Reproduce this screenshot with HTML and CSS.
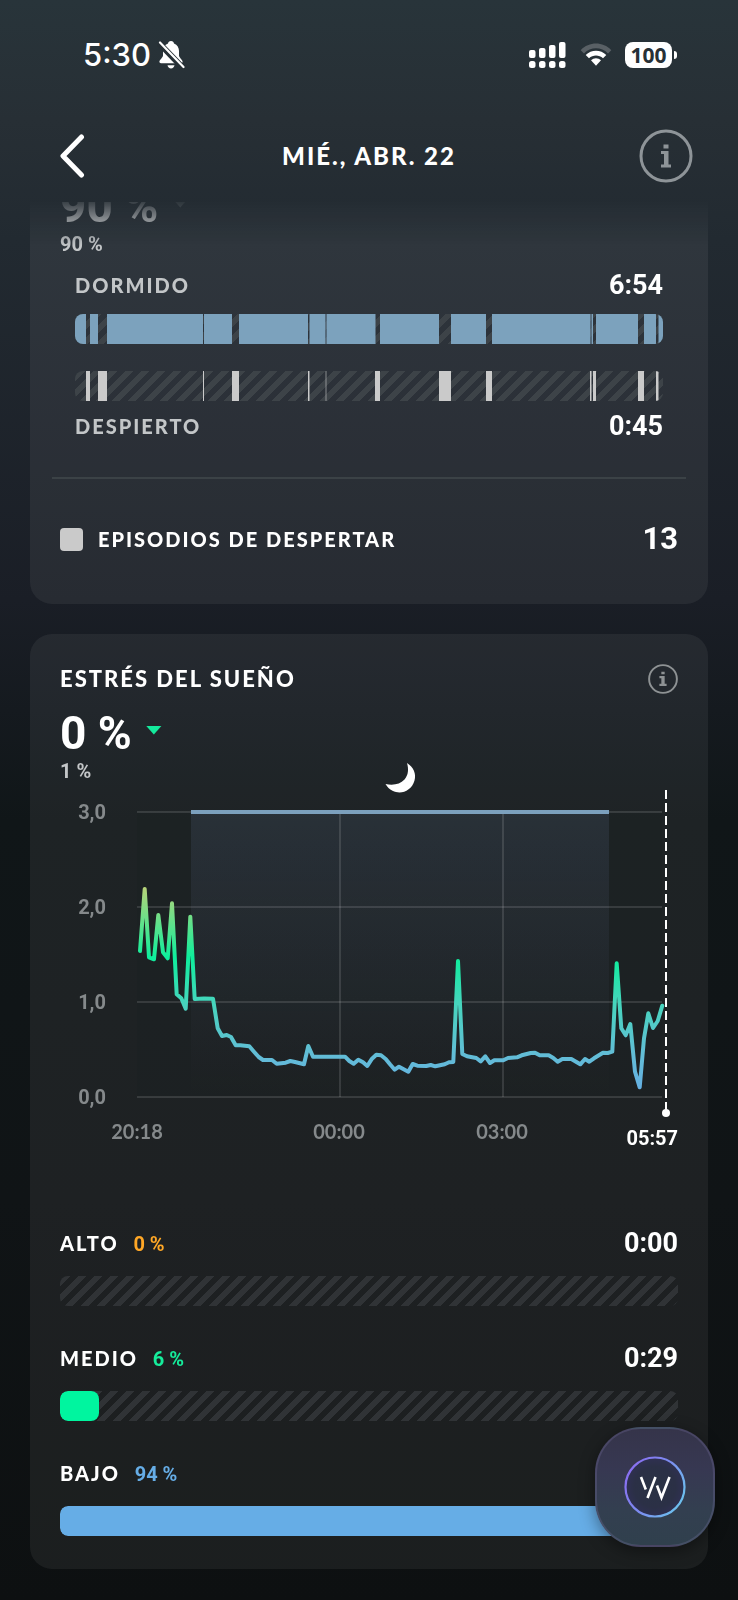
FILE: index.html
```html
<!DOCTYPE html>
<html lang="es">
<head>
    <meta charset="UTF-8">
    <meta name="viewport" content="width=device-width, initial-scale=1.0">
    <title>Estrés del sueño</title>
    <link rel="stylesheet" href="styles.css">
</head>
<body>
    <!-- Status bar -->
    <div class="status-bar">
        <div class="status-left">
            <span class="clock">5:30</span>
            <svg class="icon-bell" width="28" height="30" viewBox="0 0 28 30">
                <path d="M14 1c-1.800 0-2.800 1-3 2.400C7.600 4.600 6 7.600 6 11v4.500c0 2-3.600 4.300-3.600 6.300 0 .9.600 1.400 1.600 1.400h20c1 0 1.600-.5 1.600-1.400 0-2-3.600-4.300-3.600-6.300V11c0-3.400-1.600-6.400-5-7.600C16.800 2 15.800 1 14 1z" fill="#fff"/>
                <path d="M10.500 25.200h7c-.3 2-1.700 3.200-3.500 3.200s-3.200-1.200-3.500-3.200z" fill="#fff"/>
                <path d="M2 3L26 28" stroke="#273036" stroke-width="6"/>
                <path d="M3 2.500L26.500 27" stroke="#fff" stroke-width="2.200" stroke-linecap="round"/>
            </svg>
        </div>
        <div class="status-right">
            <svg width="38" height="28" viewBox="0 0 38 28" fill="#fff">
                <rect x="0" y="9" width="6.500" height="8" rx="2"/>
                <rect x="10" y="7" width="6.500" height="10" rx="2"/>
                <rect x="20" y="4" width="6.500" height="13" rx="2"/>
                <rect x="30" y="1" width="6.500" height="16" rx="2"/>
                <rect x="0" y="20" width="6.500" height="7" rx="2.500"/>
                <rect x="10" y="20" width="6.500" height="7" rx="2.500"/>
                <rect x="20" y="20" width="6.500" height="7" rx="2.500"/>
                <rect x="30" y="20" width="6.500" height="7" rx="2.500"/>
            </svg>
            <svg width="32" height="26" viewBox="0 0 32 26">
                <path d="M0.700 8.200C9-0.600 23-0.600 31.300 8.200L28 11.400C21.300 4.600 10.700 4.600 4 11.400z" fill="#596065"/>
                <path d="M5.700 13C11.300 7.300 20.700 7.300 26.300 13L23 16.300C19.200 12.500 12.800 12.500 9 16.300z" fill="#fff"/>
                <path d="M11 18.300C13.800 15.600 18.200 15.600 21 18.300L16 23.800z" fill="#fff"/>
            </svg>
            <span class="battery">100</span>
        </div>
    </div>

    <!-- Header -->
    <header class="header">
        <button class="back-btn" aria-label="Atrás">
            <svg width="26" height="44" viewBox="0 0 26 44" fill="none" stroke="#fff" stroke-width="5" stroke-linecap="round" stroke-linejoin="round">
                <path d="M21.500 3L3 22L21.500 41"/>
            </svg>
        </button>
        <h1>MIÉ., ABR. 22</h1>
        <button class="info-btn" aria-label="Información">
            <svg width="54" height="54" viewBox="0 0 54 54">
                <circle cx="27" cy="27" r="25" fill="none" stroke="#8e9498" stroke-width="3"/>
                <path d="M24.500 15.500h5v4h-5zM22 22h7.500v13.500H32V38.500H22V35.500h3V25h-3z" fill="#8e9498"/>
            </svg>
        </button>
    </header>

    <main class="scroll-area">
        <!-- Sleep efficiency -->
        <section class="card card-clipped">
            <div class="value">90 % <span class="trend trend-dim"></span></div>
            <div class="baseline">90 %</div>

            <div class="phases">
                <div class="row">
                    <span class="label dim">DORMIDO</span>
                    <span class="time">6:54</span>
                </div>
                <div class="track asleep">
                    <svg viewBox="0 0 588 30" preserveAspectRatio="none" fill="#7ca2bd">
                        <rect x="0" width="11" height="30"/>
                        <rect x="15" width="8" height="30"/>
                        <rect x="32" width="96" height="30"/>
                        <rect x="129" width="28" height="30"/>
                        <rect x="164" width="69" height="30"/>
                        <rect x="234.500" width="16" height="30"/>
                        <rect x="251.500" width="49" height="30"/>
                        <rect x="305" width="59" height="30"/>
                        <rect x="376" width="35" height="30"/>
                        <rect x="417" width="98.500" height="30"/>
                        <rect x="516.500" width="1.500" height="30"/>
                        <rect x="521" width="42" height="30"/>
                        <rect x="569" width="12" height="30"/>
                        <rect x="583.500" width="4.500" height="30"/>
                    </svg>
                </div>
                <div class="track awake">
                    <svg viewBox="0 0 588 30" preserveAspectRatio="none" fill="#cacaca">
                        <rect x="11" width="4" height="30"/>
                        <rect x="23" width="9" height="30"/>
                        <rect x="128" width="1" height="30"/>
                        <rect x="157" width="7" height="30"/>
                        <rect x="233" width="1.500" height="30"/>
                        <rect x="250.500" width="1" height="30" opacity="0.600"/>
                        <rect x="300" width="5" height="30"/>
                        <rect x="364" width="12" height="30"/>
                        <rect x="411" width="6" height="30"/>
                        <rect x="515" width="1.500" height="30"/>
                        <rect x="518" width="3" height="30"/>
                        <rect x="563" width="6" height="30"/>
                        <rect x="581" width="2.500" height="30"/>
                    </svg>
                </div>
                <div class="row">
                    <span class="label dim">DESPIERTO</span>
                    <span class="time">0:45</span>
                </div>
            </div>

            <div class="divider"></div>

            <div class="row episodes">
                <span class="legend">
                    <span class="swatch"></span>
                    <span class="label">EPISODIOS DE DESPERTAR</span>
                </span>
                <span class="count">13</span>
            </div>
        </section>

        <!-- Sleep stress -->
        <section class="card">
            <div class="row">
                <h2>ESTRÉS DEL SUEÑO</h2>
                <button class="info-btn" aria-label="Información sobre el estrés del sueño">
                    <svg width="30" height="30" viewBox="0 0 54 54">
                        <circle cx="27" cy="27" r="25" fill="none" stroke="#8e9294" stroke-width="3.500"/>
                        <path d="M24 14h6v4.500h-6zM20.500 21.500h9.500v14H33.500V39.500H20.500V35.500h3.500V25.500H20.500z" fill="#8e9294"/>
                    </svg>
                </button>
            </div>
            <div class="value spaced">0 % <span class="trend"></span></div>
            <div class="baseline">1 %</div>

            <svg class="chart" viewBox="0 0 618 400">
                <defs>
                    <linearGradient id="stress" gradientUnits="userSpaceOnUse" x1="0" y1="55" x2="0" y2="340">
                        <stop offset="0" stop-color="#ffa726"/>
                        <stop offset="0.270" stop-color="#b4d47a"/>
                        <stop offset="0.510" stop-color="#0eee9c"/>
                        <stop offset="0.670" stop-color="#46d5bd"/>
                        <stop offset="0.850" stop-color="#62bdd6"/>
                        <stop offset="1" stop-color="#66ade6"/>
                    </linearGradient>
                    <linearGradient id="night" x1="0" y1="0" x2="0" y2="1">
                        <stop offset="0" stop-color="#7084ac" stop-opacity="0.150"/>
                        <stop offset="1" stop-color="#7084ac" stop-opacity="0"/>
                    </linearGradient>
                </defs>

                <!-- Moon -->
                <path d="M347 6C353.500 10 356.500 17 354.500 23.500C351.500 34 341 38 332.500 33.800C329.500 32.300 327.200 30 325.500 27C333 28.500 340 27.500 344.500 22.500C348.500 18 348.800 12 347 6z" fill="#fff"/>

                <!-- Area outside and inside the night -->
                <rect x="77" y="55" width="525" height="285" fill="#000" opacity="0.030"/>
                <rect x="131" y="55" width="418" height="285" fill="url(#night)"/>

                <!-- Grid -->
                <g stroke="#fff" stroke-opacity="0.120" stroke-width="2">
                    <path d="M77 55H602M77 150H602M77 245H602M77 340H602"/>
                    <path d="M280 55V340M443 55V340"/>
                </g>
                <path d="M131 55H549" stroke="#7ca0bd" stroke-width="4"/>

                <!-- Stress line -->
                <polyline class="stress-line" stroke="url(#stress)" points="80,194 84.700,132 89,200.300 94,202.300 98.300,158 103,195.300 107.700,201.300 112,146.300 116.700,237.300 121.300,241.300 125.700,251.700 130.300,159.700 134.700,242 144,241.500 153,241.700 157.700,271.300 162,279 166.700,278 171,280 175.700,288.300 180.300,288.300 189.300,289.300 194,294.700 198.700,300 203,303 212,303 216.700,306.700 225.700,305.700 230.300,304 235,305 244,307.300 248.300,289 253,299.700 285,299.700 289.300,304 293.700,306.700 298.300,302.700 303,305.300 307.300,309 312,301.700 316.300,297.700 321,298.300 325.700,302 330,307.300 334.700,312.700 339,309.700 348.300,314.700 352.700,307 357.300,308.700 366.300,309 370.700,308 375.300,309.300 384.700,307.300 389,305.300 393.300,305 398,204 402.300,297 407,299.300 416.300,301 420.700,304.300 425.300,299.300 430,306 434.300,303.300 443.300,303.300 448,301 457,300.300 461.700,298.300 470.700,296 475,295.700 479.700,298.300 488.700,298.300 493.300,301 497.700,304.700 502.300,302 511.300,302 516,304.700 520.300,307.300 525,302 529.300,304.700 534,301.300 543,295.700 547.700,296 552.300,294.700 556.700,206.300 561.300,271.300 565.700,278.300 570.300,267 575,314.700 579.700,330.300 584,281.300 588.300,256.300 593,271 597.700,264 602.300,248.700"/>

                <!-- Wake marker -->
                <path d="M606 33V356" stroke="#fff" stroke-width="2" stroke-dasharray="9 4"/>
                <circle cx="606" cy="356" r="4" fill="#fff"/>

                <!-- Axis labels -->
                <g class="axis-y">
                    <text x="46" y="62">3,0</text>
                    <text x="46" y="157">2,0</text>
                    <text x="46" y="252">1,0</text>
                    <text x="46" y="347">0,0</text>
                </g>
                <g class="axis-x">
                    <text x="77" y="382">20:18</text>
                    <text x="279" y="382">00:00</text>
                    <text x="442" y="382">03:00</text>
                </g>
                <text class="axis-end" x="618" y="388">05:57</text>
            </svg>

            <div class="levels">
                <div class="level">
                    <div class="row">
                        <span class="label">ALTO <span class="percent high">0 %</span></span>
                        <span class="time">0:00</span>
                    </div>
                    <div class="track"></div>
                </div>
                <div class="level">
                    <div class="row">
                        <span class="label">MEDIO <span class="percent medium">6 %</span></span>
                        <span class="time">0:29</span>
                    </div>
                    <div class="track"><div class="fill fill-medium"></div></div>
                </div>
                <div class="level">
                    <div class="row">
                        <span class="label">BAJO <span class="percent low">94 %</span></span>
                    </div>
                    <div class="track"><div class="fill fill-low"></div></div>
                </div>
            </div>
        </section>
    </main>

    <!-- Floating coach button -->
    <button class="coach-btn" aria-label="Coach">
        <svg width="64" height="64" viewBox="0 0 64 64" fill="none">
            <defs>
                <linearGradient id="ring" x1="0" y1="0.200" x2="1" y2="0.800">
                    <stop offset="0" stop-color="#8a6cf0"/>
                    <stop offset="0.500" stop-color="#7c8df0"/>
                    <stop offset="1" stop-color="#6bc6ee"/>
                </linearGradient>
                <radialGradient id="disc">
                    <stop offset="0" stop-color="#2a3244"/>
                    <stop offset="0.700" stop-color="#2b3046"/>
                    <stop offset="1" stop-color="#2f3052"/>
                </radialGradient>
            </defs>
            <circle cx="32" cy="32" r="29.500" fill="url(#disc)" stroke="url(#ring)" stroke-width="2.200"/>
            <path d="M18 22L22.800 34.500M32.500 22L24.500 43M34 30.500L38.500 42.500L46.500 22" stroke="#fff" stroke-width="2.600"/>
        </svg>
    </button>
</body>
</html>
```

FILE: styles.css
```css
/* Base styles */
* {
    margin: 0;
    padding: 0;
    box-sizing: border-box;
}

body {
    font-family: Lato, "Open Sans", sans-serif;
    color: #fff;
    min-height: 100vh;
    background: linear-gradient(to bottom, #28343a 0, #272f35 120px, #222a31 240px, #1a1e26 600px, #101618 820px, #101416 1200px, #0d1011 1600px);
}

button {
    background: none;
    border: none;
    color: inherit;
    cursor: pointer;
}

svg {
    display: block;
}

/* Status bar */
.status-bar {
    height: 110px;
    padding: 0 61px 0 83px;
    display: flex;
    justify-content: space-between;
    align-items: center;
}

.status-left,
.status-right {
    display: flex;
    align-items: center;
}

.status-left {
    gap: 6px;
}

.status-right {
    gap: 13px;
}

.clock {
    font-family: Inter, sans-serif;
    font-size: 31px;
    font-weight: 500;
    line-height: 40px;
}

.battery {
    position: relative;
    width: 47px;
    height: 26px;
    margin-right: 5px;
    border-radius: 8px;
    background: #fff;
    color: #273036;
    font-family: "Noto Sans", sans-serif;
    font-size: 21px;
    font-weight: 700;
    line-height: 26px;
    text-align: center;
}

.battery::after {
    content: "";
    position: absolute;
    top: 9px;
    right: -5px;
    width: 3px;
    height: 8px;
    border-radius: 0 4px 4px 0;
    background: #fff;
}

/* Header */
.header {
    height: 92px;
    padding: 0 45px;
    display: grid;
    grid-template-columns: 1fr auto 1fr;
    align-items: center;
}

.header h1 {
    font-size: 24px;
    font-weight: 900;
    line-height: 30px;
    letter-spacing: 2px;
}

.header .back-btn {
    justify-self: start;
    margin-left: 15px;
}

.header .info-btn {
    justify-self: end;
}

.scroll-area {
    padding: 0 30px 30px;
    overflow: hidden;
    -webkit-mask-image: linear-gradient(to bottom, rgba(0, 0, 0, 0.1), #000 44px);
    mask-image: linear-gradient(to bottom, rgba(0, 0, 0, 0.1), #000 44px);
}

.card {
    padding: 30px 30px 33px;
    border-radius: 22px;
    background: rgba(255, 255, 255, 0.06);
}

.card-clipped {
    margin: -20px 0 30px;
    padding: 0 30px 50px;
}

.row {
    display: flex;
    justify-content: space-between;
    align-items: center;
    height: 30px;
}

h2 {
    font-size: 22px;
    font-weight: 900;
    line-height: 30px;
    letter-spacing: 2px;
}

.label {
    font-size: 20px;
    font-weight: 900;
    line-height: 30px;
    letter-spacing: 2px;
}

.dim {
    color: #c3c6c8;
}

/* Numbers */
.value,
.baseline,
.time,
.count,
.percent {
    font-family: Roboto, sans-serif;
    letter-spacing: normal;
}

.value {
    display: flex;
    align-items: center;
    gap: 14px;
    font-size: 46px;
    font-weight: 700;
    line-height: 48px;
}

.spaced {
    margin-top: 15px;
}

.baseline {
    color: #c3c6c8;
    font-size: 20px;
    font-weight: 700;
    line-height: 28px;
}

.time {
    font-size: 27px;
    font-weight: 700;
    line-height: 30px;
}

.count {
    font-size: 31px;
    font-weight: 700;
    line-height: 30px;
}

.trend {
    width: 16px;
    height: 9px;
    margin-bottom: 6px;
    background: #14ea9c;
    clip-path: polygon(0 0, 100% 0, 50% 100%);
}

.trend-dim {
    background: #8e9498;
}

/* Tracks */
.track {
    height: 30px;
    border-radius: 8px;
    overflow: hidden;
    background: linear-gradient(135deg, #303336 25%, transparent 25% 50%, #303336 50% 75%, transparent 75%) 2px 0 / 16px 16px;
}

.phases .track {
    background-image: linear-gradient(135deg, #3d4348 25%, transparent 25% 50%, #3d4348 50% 75%, transparent 75%);
}

.track svg {
    width: 100%;
    height: 100%;
}

/* Phases */
.phases {
    margin-top: 12px;
    padding: 0 15px;
}

.asleep {
    margin-top: 14px;
}

.awake {
    margin: 27px 0 10px;
}

.divider {
    height: 2px;
    margin: 36px -8px 45px;
    background: #3b4246;
}

.legend {
    display: flex;
    align-items: center;
    gap: 15px;
}

.swatch {
    width: 23px;
    height: 23px;
    border-radius: 4px;
    background: #cacaca;
}

/* Chart */
.chart {
    width: 100%;
    margin-top: -28px;
}

.stress-line {
    fill: none;
    stroke-width: 4;
    stroke-linecap: round;
    stroke-linejoin: round;
}

.axis-y,
.axis-end {
    font-family: Roboto, sans-serif;
    font-size: 20px;
    font-weight: 700;
    text-anchor: end;
}

.axis-y {
    fill: #85898b;
}

.axis-x {
    fill: #85898b;
    font-size: 20px;
    font-weight: 700;
    text-anchor: middle;
}

.axis-end {
    fill: #fff;
}

/* Levels */
.levels {
    display: flex;
    flex-direction: column;
    gap: 37px;
    margin-top: 71px;
}

.level .track {
    margin-top: 18px;
}

.percent {
    margin-left: 8px;
    font-weight: 700;
}

.high {
    color: #ffa726;
}

.medium {
    color: #16ec9b;
}

.low {
    color: #66ade6;
}

.fill {
    height: 100%;
    border-radius: 8px;
}

.fill-medium {
    width: 39px;
    background: #00f59f;
}

.fill-low {
    width: 94%;
    background: #66ade6;
}

/* Coach button */
.coach-btn {
    position: fixed;
    right: 23px;
    bottom: 53px;
    display: flex;
    justify-content: center;
    align-items: center;
    width: 120px;
    height: 120px;
    border: 2px solid rgba(150, 140, 200, 0.2);
    border-radius: 46px;
    background: linear-gradient(to bottom, #35344a 0, #373852 35%, #333f50 70%, #30404d 100%);
    box-shadow: 0 4px 16px rgba(0, 0, 0, 0.4);
}
```
